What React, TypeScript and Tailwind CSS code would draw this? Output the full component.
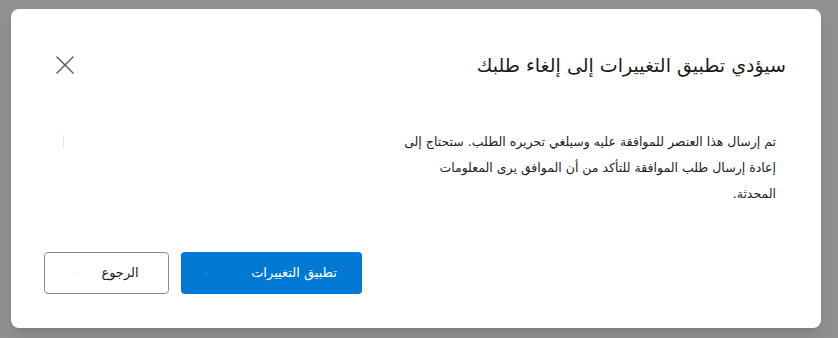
import React from "react"

const font = { fontFamily: '"DejaVu Sans", "Noto Sans", sans-serif' }

function CloseIcon() {
  return (
    <svg width="18" height="18" viewBox="0 0 18 18" fill="none" stroke="#5c5c5c" strokeWidth="1.5" strokeLinecap="round">
      <line x1="1" y1="1" x2="17" y2="17" />
      <line x1="17" y1="1" x2="1" y2="17" />
    </svg>
  )
}

export default function App() {
  return (
    <div className="w-[838px] h-[338px] bg-[#909090] pt-[9px] pl-[11px]" style={font}>
      <div dir="rtl" className="w-[810px] h-[319px] bg-white rounded-lg shadow-lg flex flex-col">
        {/* header */}
        <div className="flex items-center justify-between pr-[35px] pl-[39px] pt-[42px] h-[70px]">
          <h2 className="text-[19px] leading-[28px] text-[#1b1b1b] font-normal whitespace-nowrap">
            سيؤدي تطبيق التغييرات إلى إلغاء طلبك
          </h2>
          <button className="w-[30px] h-[28px] flex items-center justify-center">
            <CloseIcon />
          </button>
        </div>

        {/* body */}
        <div className="flex pr-[45px] pl-[52px] mt-[50px]">
          <p className="w-[372px] text-[12.5px] leading-[26px] text-[#242424] whitespace-nowrap">
            تم إرسال هذا العنصر للموافقة عليه وسيلغي تحريره الطلب. ستحتاج إلى
            <br />
            إعادة إرسال طلب الموافقة للتأكد من أن الموافق يرى المعلومات
            <br />
            المحدثة.
          </p>
          <div className="flex-1 flex justify-end pt-[6px]">
            <span className="w-px h-[13px] bg-[#e6e6e6]" />
          </div>
        </div>

        {/* footer */}
        <div className="flex justify-end gap-3 pl-[33px] mt-auto mb-[34px]">
          <button className="w-[181px] h-[42px] rounded bg-[#0078d4] text-white text-[13px] flex items-center justify-center gap-[44px]">
            <span>تطبيق التغييرات</span>
            <span className="w-px h-px bg-[#9ec6ea]" />
          </button>
          <button className="w-[125px] h-[42px] rounded border border-[#8a8a8a] bg-white text-[#1b1b1b] text-[13px] flex items-center justify-center gap-[26px]">
            <span>الرجوع</span>
            <span className="w-px h-px bg-[#c8c8c8]" />
          </button>
        </div>
      </div>
    </div>
  )
}
